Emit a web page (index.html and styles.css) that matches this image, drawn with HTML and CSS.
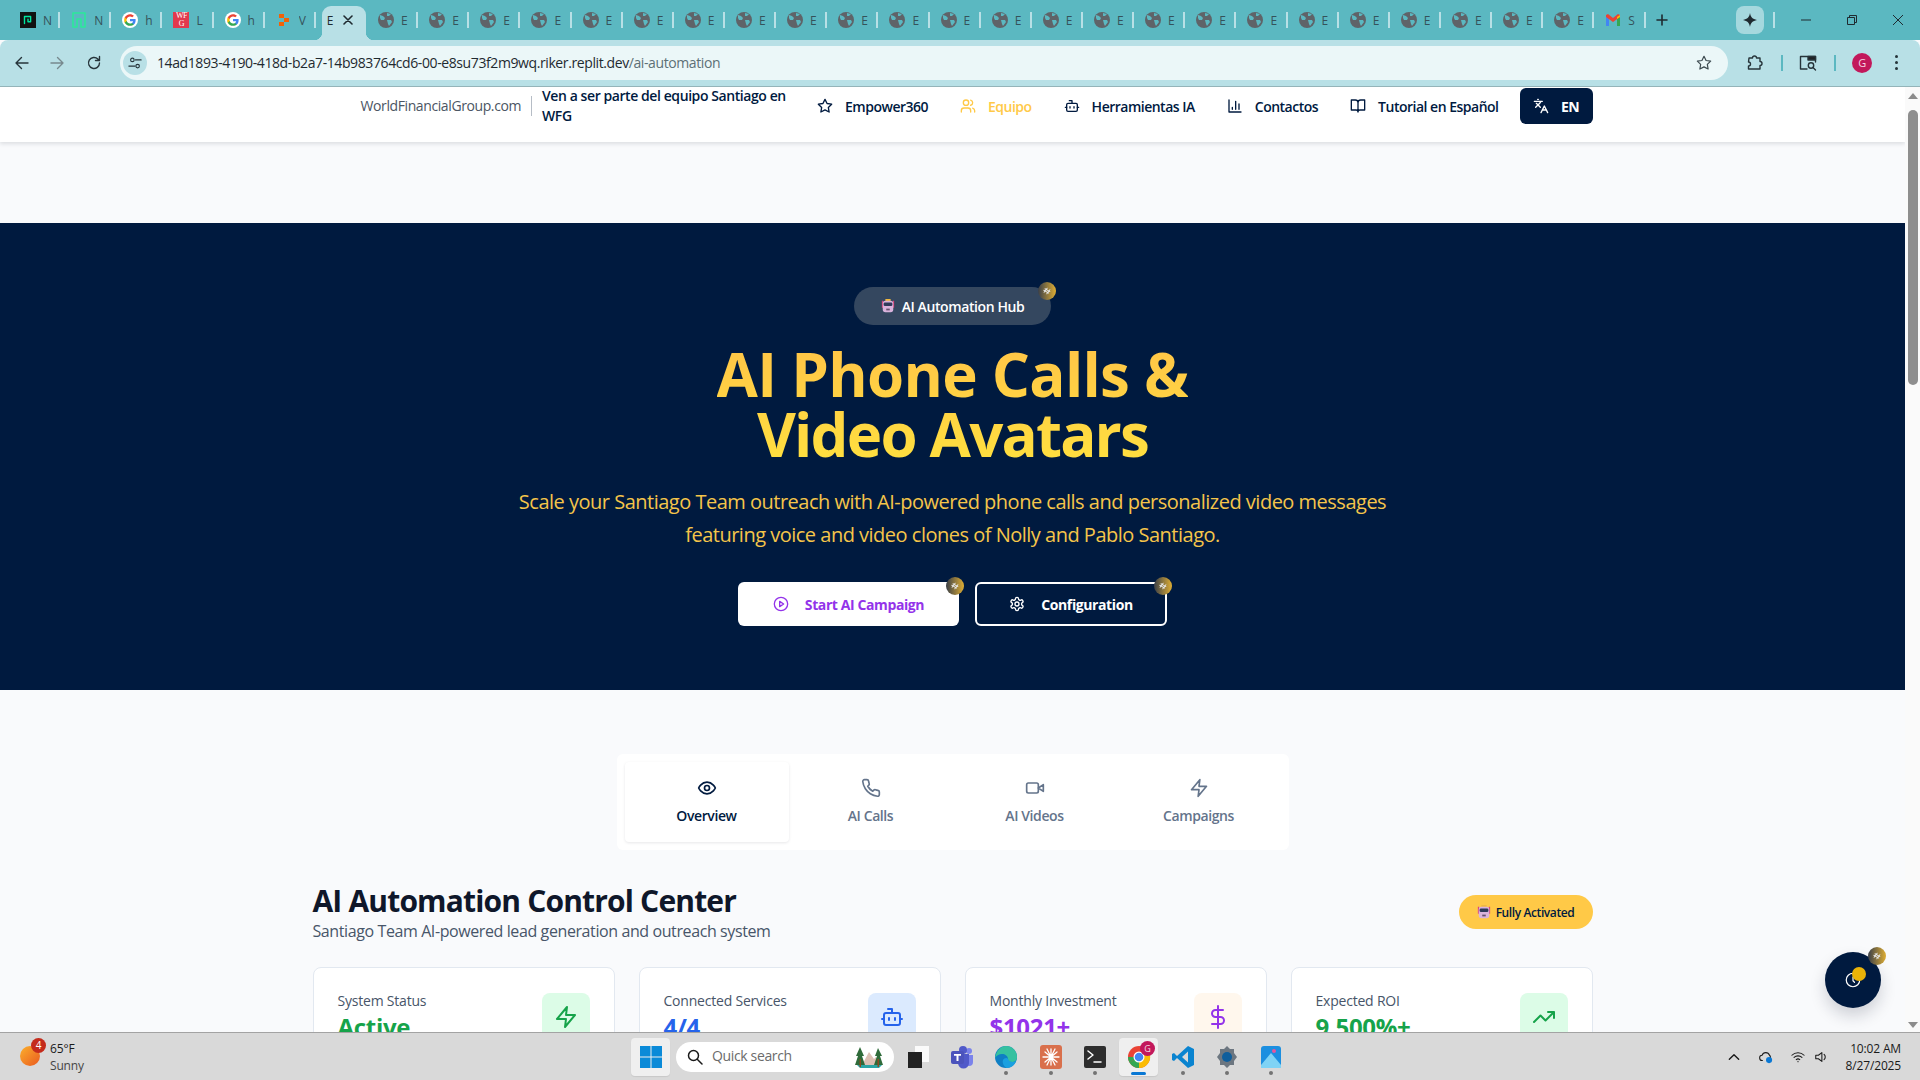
FILE: index.html
```html
<!DOCTYPE html>
<html>

<head>
    <title>AI Automation</title>
    <meta charset="utf-8">
    <link rel="stylesheet" href="styles.css">
</head>

<body>
    <!-- icones reutilisees -->
    <svg class="sprite" xmlns="http://www.w3.org/2000/svg">
        <symbol id="globe" viewBox="0 0 16 16">
            <circle cx="8" cy="8" r="8" fill="#5f6368" />
            <path d="M2 3l3 1 2 2-1 2-3 0-1-2zM9 1l4 1-2 2-2 0zM9 8l4 0 1 2-3 4-1-2z" fill="#5bb8c1" />
        </symbol>
        <symbol id="google" viewBox="0 0 24 24">
            <circle cx="12" cy="12" r="12" fill="#fff" />
            <g transform="translate(2.4 2.4) scale(.8)">
                <path fill="#4285F4" d="M22.56 12.25c0-.78-.07-1.53-.2-2.25H12v4.26h5.92c-.26 1.37-1.04 2.53-2.21 3.31v2.77h3.57c2.08-1.92 3.28-4.74 3.28-8.09z" />
                <path fill="#34A853" d="M12 23c2.97 0 5.46-.98 7.28-2.66l-3.57-2.77c-.98.66-2.23 1.06-3.71 1.06-2.86 0-5.29-1.93-6.16-4.53H2.18v2.84C3.99 20.53 7.7 23 12 23z" />
                <path fill="#FBBC05" d="M5.84 14.09c-.22-.66-.35-1.36-.35-2.09s.13-1.43.35-2.09V7.07H2.18C1.43 8.55 1 10.22 1 12s.43 3.45 1.18 4.93l3.66-2.84z" />
                <path fill="#EA4335" d="M12 5.38c1.62 0 3.06.56 4.21 1.64l3.15-3.15C17.45 2.09 14.97 1 12 1 7.7 1 3.99 3.47 2.18 7.07l3.66 2.84c.87-2.6 3.3-4.53 6.16-4.53z" />
            </g>
        </symbol>
        <symbol id="bot" viewBox="0 0 24 24">
            <path d="M12 8V4H8" />
            <rect x="4" y="8" width="16" height="12" rx="2" />
            <path d="M2 14h2M20 14h2M15 13v2M9 13v2" />
        </symbol>
        <symbol id="zap" viewBox="0 0 24 24">
            <polygon points="13 2 3 14 12 14 11 22 21 10 12 10 13 2" />
        </symbol>
        <symbol id="spark" viewBox="0 0 16 16">
            <path d="M6 4 5 12M11 4l-1 8M3.500 6.500h9M3 9.500h9" />
        </symbol>
        <symbol id="robot" viewBox="0 0 16 16">
            <rect x="5" y="0" width="6" height="3" fill="#f0b840" />
            <rect x="1" y="2" width="1.500" height="8" fill="#d8457a" />
            <rect x="13.500" y="2" width="1.500" height="8" fill="#d8457a" />
            <rect x="2" y="2" width="12" height="13" rx="3" fill="#d9b3dc" />
            <rect x="3" y="4" width="10" height="4" rx="1.500" fill="#2f3a5a" />
            <rect x="6" y="11" width="4" height="2" fill="#66506e" />
        </symbol>
    </svg>

    <div class="strip">
        <div class="tab"><span class="fav fav-neon"><svg viewBox="0 0 16 16"><path d="M4 12V4h7v6H8V7" /></svg></span><span class="tab-txt">N</span></div>
        <div class="tab"><span class="fav"><svg class="n-big" viewBox="0 0 16 16"><path d="M2 15V1h12v14h-4V7H6v8z" /></svg></span><span class="tab-txt">N</span></div>
        <div class="tab"><svg class="fav"><use href="#google" /></svg><span class="tab-txt">h</span></div>
        <div class="tab"><span class="fav fav-wfg">WF<br>G</span><span class="tab-txt">L</span></div>
        <div class="tab"><svg class="fav"><use href="#google" /></svg><span class="tab-txt">h</span></div>
        <div class="tab"><svg class="fav" viewBox="0 0 16 16"><path d="M3 2h5v4H3zM8 6h5v4H8zM3 10h5v4H3z" fill="#f26207" /></svg><span class="tab-txt">V</span></div>
        <div class="tab tab-on"><span class="tab-txt">E</span><svg class="tab-x" viewBox="0 0 10 10"><path d="M1 1l8 8M9 1l-8 8" /></svg></div>
        <div class="tab"><svg class="fav"><use href="#globe" /></svg><span class="tab-txt">E</span></div>
        <div class="tab"><svg class="fav"><use href="#globe" /></svg><span class="tab-txt">E</span></div>
        <div class="tab"><svg class="fav"><use href="#globe" /></svg><span class="tab-txt">E</span></div>
        <div class="tab"><svg class="fav"><use href="#globe" /></svg><span class="tab-txt">E</span></div>
        <div class="tab"><svg class="fav"><use href="#globe" /></svg><span class="tab-txt">E</span></div>
        <div class="tab"><svg class="fav"><use href="#globe" /></svg><span class="tab-txt">E</span></div>
        <div class="tab"><svg class="fav"><use href="#globe" /></svg><span class="tab-txt">E</span></div>
        <div class="tab"><svg class="fav"><use href="#globe" /></svg><span class="tab-txt">E</span></div>
        <div class="tab"><svg class="fav"><use href="#globe" /></svg><span class="tab-txt">E</span></div>
        <div class="tab"><svg class="fav"><use href="#globe" /></svg><span class="tab-txt">E</span></div>
        <div class="tab"><svg class="fav"><use href="#globe" /></svg><span class="tab-txt">E</span></div>
        <div class="tab"><svg class="fav"><use href="#globe" /></svg><span class="tab-txt">E</span></div>
        <div class="tab"><svg class="fav"><use href="#globe" /></svg><span class="tab-txt">E</span></div>
        <div class="tab"><svg class="fav"><use href="#globe" /></svg><span class="tab-txt">E</span></div>
        <div class="tab"><svg class="fav"><use href="#globe" /></svg><span class="tab-txt">E</span></div>
        <div class="tab"><svg class="fav"><use href="#globe" /></svg><span class="tab-txt">E</span></div>
        <div class="tab"><svg class="fav"><use href="#globe" /></svg><span class="tab-txt">E</span></div>
        <div class="tab"><svg class="fav"><use href="#globe" /></svg><span class="tab-txt">E</span></div>
        <div class="tab"><svg class="fav"><use href="#globe" /></svg><span class="tab-txt">E</span></div>
        <div class="tab"><svg class="fav"><use href="#globe" /></svg><span class="tab-txt">E</span></div>
        <div class="tab"><svg class="fav"><use href="#globe" /></svg><span class="tab-txt">E</span></div>
        <div class="tab"><svg class="fav"><use href="#globe" /></svg><span class="tab-txt">E</span></div>
        <div class="tab"><svg class="fav"><use href="#globe" /></svg><span class="tab-txt">E</span></div>
        <div class="tab"><svg class="fav"><use href="#globe" /></svg><span class="tab-txt">E</span></div>
        <div class="tab"><svg class="fav" viewBox="0 0 16 16"><path d="M1 14V3l3 2v9z" fill="#4285F4" /><path d="M12 14V5l3-2v11z" fill="#34A853" /><path d="M1 3l2-1 5 4 5-4 2 1v2L8 10 1 5z" fill="#EA4335" /><path d="M12 5l3-2v2l-3 2z" fill="#FBBC05" /></svg><span class="tab-txt">S</span></div>
        <svg class="new-tab" viewBox="0 0 12 12"><path d="M6 1v10M1 6h10" /></svg>
        <div class="gem"><svg viewBox="0 0 16 16"><path d="M8 0c.8 4.500 2.800 7 8 8-5.200 1-7.200 3.500-8 8-.8-4.500-2.800-7-8-8 5.200-1 7.200-3.500 8-8z" /></svg></div>
        <span class="win-sep"></span>
        <svg class="win-btn" viewBox="0 0 12 12"><path d="M1 6h10" /></svg>
        <svg class="win-btn" viewBox="0 0 12 12"><path d="M1.500 3.500h7v7h-7zM3.500 3.500v-2h7v7h-2" /></svg>
        <svg class="win-btn" viewBox="0 0 12 12"><path d="M1 1l10 10M11 1L1 11" /></svg>
    </div>

    <div class="toolbar">
        <svg class="tool" viewBox="0 0 16 16"><path d="M14 8H2M7.500 2.500 2 8l5.500 5.500" /></svg>
        <svg class="tool tool-off" viewBox="0 0 16 16"><path d="M2 8h12M8.500 2.500 14 8l-5.500 5.500" /></svg>
        <svg class="tool tool-reload" viewBox="0 0 16 16"><path d="M13.500 8a5.500 5.500 0 1 1-1.600-3.900L13.500 5.500M13.500 1.500v4h-4" /></svg>
        <div class="omni">
            <span class="site-chip"><svg viewBox="0 0 16 16"><circle cx="5" cy="4.500" r="2" /><circle cx="11" cy="11.500" r="2" /><path d="M8.500 4.500H15M1 11.500h7" /></svg></span>
            <span class="url">14ad1893-4190-418d-b2a7-14b983764cd6-00-e8su73f2m9wq.riker.replit.dev<span class="url-path">/ai-automation</span></span>
            <svg class="omni-star" viewBox="0 0 24 24"><polygon points="12 2 15.090 8.260 22 9.270 17 14.140 18.180 21.020 12 17.770 5.820 21.020 7 14.140 2 9.270 8.910 8.260 12 2" /></svg>
        </div>
        <svg class="tool tool-ext" viewBox="0 0 18 18"><path d="M3 4h3.500a2 2 0 0 1 4 0H14v3.500a2 2 0 0 1 0 4V15H2.500v-3a2 2 0 0 0 0-4z" /></svg>
        <span class="tool-sep"></span>
        <svg class="tool tool-search" viewBox="0 0 18 18"><path d="M8 15H1.500V2.500h15V8" /><rect x="9" y="2.500" width="7.500" height="3.500" fill="#202124" /><circle cx="12" cy="11.500" r="2.700" /><path d="M14 13.500l2.500 2.500" /></svg>
        <span class="tool-sep"></span>
        <span class="avatar">G</span>
        <span class="dots"><i></i><i></i><i></i></span>
    </div>

    <div class="viewport">
        <div class="page">
            <div class="topnav">
                <div class="topnav-in">
                    <span class="wfg-link">WorldFinancialGroup.com</span>
                    <span class="join">Ven a ser parte del equipo Santiago en WFG</span>
                    <span class="nav-item"><svg class="ico" viewBox="0 0 24 24"><polygon points="12 2 15.090 8.260 22 9.270 17 14.140 18.180 21.020 12 17.770 5.820 21.020 7 14.140 2 9.270 8.910 8.260 12 2" /></svg>Empower360</span>
                    <span class="nav-item nav-on"><svg class="ico" viewBox="0 0 24 24"><path d="M16 21v-2a4 4 0 0 0-4-4H6a4 4 0 0 0-4 4v2" /><circle cx="9" cy="7" r="4" /><path d="M22 21v-2a4 4 0 0 0-3-3.870M16 3.130a4 4 0 0 1 0 7.750" /></svg>Equipo</span>
                    <span class="nav-item"><svg class="ico"><use href="#bot" /></svg>Herramientas IA</span>
                    <span class="nav-item"><svg class="ico" viewBox="0 0 24 24"><path d="M3 3v18h18M18 17V9M13 17V5M8 17v-3" /></svg>Contactos</span>
                    <span class="nav-item"><svg class="ico" viewBox="0 0 24 24"><path d="M2 3h6a4 4 0 0 1 4 4v14a3 3 0 0 0-3-3H2zM22 3h-6a4 4 0 0 0-4 4v14a3 3 0 0 1 3-3h7z" /></svg>Tutorial en Español</span>
                    <span class="lang"><svg class="ico" viewBox="0 0 24 24"><path d="m5 8 6 6M4 14l6-6 2-3M2 5h12M7 2h1M22 22l-5-10-5 10M14 18h6" /></svg>EN</span>
                </div>
            </div>

            <section class="hero">
                <div class="hero-badge">
                    <svg class="emoji"><use href="#robot" /></svg>AI Automation Hub
                    <span class="spark"><svg><use href="#spark" /></svg></span>
                </div>
                <h1 class="hero-title">AI Phone Calls &amp;<br><span class="title-two">Video Avatars</span></h1>
                <p class="hero-sub">Scale your Santiago Team outreach with AI-powered phone calls and personalized video messages<br>featuring voice and video clones of Nolly and Pablo Santiago.</p>
                <div class="hero-btns">
                    <span class="btn btn-white">
                        <svg class="ico" viewBox="0 0 24 24"><circle cx="12" cy="12" r="10" /><polygon points="10 8 16 12 10 16 10 8" /></svg>Start AI Campaign
                        <span class="spark"><svg><use href="#spark" /></svg></span>
                    </span>
                    <span class="btn btn-line">
                        <svg class="ico" viewBox="0 0 24 24"><path d="M12.220 2h-.44a2 2 0 0 0-2 2v.18a2 2 0 0 1-1 1.730l-.43.25a2 2 0 0 1-2 0l-.15-.08a2 2 0 0 0-2.730.73l-.22.38a2 2 0 0 0 .73 2.730l.15.1a2 2 0 0 1 1 1.720v.51a2 2 0 0 1-1 1.740l-.15.09a2 2 0 0 0-.73 2.730l.22.38a2 2 0 0 0 2.730.73l.15-.08a2 2 0 0 1 2 0l.43.25a2 2 0 0 1 1 1.730V20a2 2 0 0 0 2 2h.44a2 2 0 0 0 2-2v-.18a2 2 0 0 1 1-1.730l.43-.25a2 2 0 0 1 2 0l.15.08a2 2 0 0 0 2.730-.73l.22-.39a2 2 0 0 0-.73-2.730l-.15-.08a2 2 0 0 1-1-1.740v-.5a2 2 0 0 1 1-1.740l.15-.09a2 2 0 0 0 .73-2.730l-.22-.38a2 2 0 0 0-2.730-.73l-.15.08a2 2 0 0 1-2 0l-.43-.25a2 2 0 0 1-1-1.730V4a2 2 0 0 0-2-2z" /><circle cx="12" cy="12" r="3" /></svg>Configuration
                        <span class="spark"><svg><use href="#spark" /></svg></span>
                    </span>
                </div>
            </section>

            <div class="tabs">
                <div class="tabs-item tabs-on"><svg viewBox="0 0 24 24"><path d="M2 12s3-7 10-7 10 7 10 7-3 7-10 7-10-7-10-7Z" /><circle cx="12" cy="12" r="3" /></svg>Overview</div>
                <div class="tabs-item"><svg viewBox="0 0 24 24"><path d="M22 16.920v3a2 2 0 0 1-2.180 2 19.790 19.790 0 0 1-8.630-3.070 19.500 19.500 0 0 1-6-6 19.790 19.790 0 0 1-3.070-8.670A2 2 0 0 1 4.110 2h3a2 2 0 0 1 2 1.720 12.840 12.840 0 0 0 .7 2.810 2 2 0 0 1-.45 2.110L8.090 9.910a16 16 0 0 0 6 6l1.270-1.270a2 2 0 0 1 2.110-.45 12.840 12.840 0 0 0 2.810.7A2 2 0 0 1 22 16.920z" /></svg>AI Calls</div>
                <div class="tabs-item"><svg viewBox="0 0 24 24"><path d="m22 8-6 4 6 4V8Z" /><rect x="2" y="6" width="14" height="12" rx="2" /></svg>AI Videos</div>
                <div class="tabs-item"><svg><use href="#zap" /></svg>Campaigns</div>
            </div>

            <section class="control">
                <div class="control-head">
                    <div>
                        <h2>AI Automation Control Center</h2>
                        <p>Santiago Team AI-powered lead generation and outreach system</p>
                    </div>
                    <span class="pill"><svg class="emoji"><use href="#robot" /></svg>Fully Activated</span>
                </div>
                <div class="cards">
                    <div class="card">
                        <div>
                            <div class="card-label">System Status</div>
                            <div class="card-value c-green">Active</div>
                        </div>
                        <span class="card-ico bg-green c-green"><svg><use href="#zap" /></svg></span>
                    </div>
                    <div class="card">
                        <div>
                            <div class="card-label">Connected Services</div>
                            <div class="card-value c-blue">4/4</div>
                        </div>
                        <span class="card-ico bg-blue c-blue"><svg><use href="#bot" /></svg></span>
                    </div>
                    <div class="card">
                        <div>
                            <div class="card-label">Monthly Investment</div>
                            <div class="card-value c-purple">$1021+</div>
                        </div>
                        <span class="card-ico bg-cream c-purple"><svg viewBox="0 0 24 24"><path d="M12 1v22M17 5H9.500a3.500 3.500 0 0 0 0 7h5a3.500 3.500 0 0 1 0 7H6" /></svg></span>
                    </div>
                    <div class="card">
                        <div>
                            <div class="card-label">Expected ROI</div>
                            <div class="card-value c-green">9,500%+</div>
                        </div>
                        <span class="card-ico bg-green c-green"><svg viewBox="0 0 24 24"><path d="M22 7l-8.500 8.500-5-5L2 17M16 7h6v6" /></svg></span>
                    </div>
                </div>
            </section>

            <div class="fab">
                <svg viewBox="0 0 24 24"><circle cx="12" cy="12" r="9" /><path d="M12 8v5l2 2" /></svg>
                <span class="fab-dot"></span>
                <span class="spark"><svg><use href="#spark" /></svg></span>
            </div>
        </div>
        <div class="scrollbar">
            <span class="arrow-up"></span>
            <span class="thumb"></span>
            <span class="arrow-down"></span>
        </div>
    </div>

    <div class="taskbar">
        <div class="weather">
            <span class="sun"></span>
            <span class="sun-badge">4</span>
            <div class="weather-txt">65°F<span>Sunny</span></div>
        </div>
        <div class="task-mid">
            <span class="task-btn task-hi task-start">
                <svg viewBox="0 0 24 24"><path d="M1 1h10.500v10.500H1zM12.500 1H23v10.500H12.500zM1 12.500h10.500V23H1zM12.500 12.500H23V23H12.500z" fill="#0a8ad8" /></svg>
            </span>
            <div class="search">
                <svg viewBox="0 0 16 16"><circle cx="6.500" cy="6.500" r="5" /><path d="M10.500 10.500 15 15" /></svg>
                <span>Quick search</span>
                <svg class="search-pic" viewBox="0 0 30 24"><path d="M8 20 15 7l5 7 2-2 4 8z" fill="#dcc0b4" /><path d="M3 20h25l-3 3H6z" fill="#2ba5a5" /><path d="M6 2 2 11h2l-3 9h10l-3-9h2zM24 3l-3 8h2l-3 9h9l-3-9h2z" fill="#2f6b3a" /><path d="M5.500 14h1.500v8H5.500zM23.500 14H25v8h-1.500z" fill="#8a4b24" /></svg>
            </div>
            <span class="task-btn"><svg viewBox="0 0 24 24"><rect x="9" y="1" width="14" height="16" fill="#fafafa" /><rect x="2" y="7" width="14" height="16" fill="#222" /></svg></span>
            <span class="task-btn"><svg viewBox="0 0 24 24"><circle cx="19" cy="6" r="3" fill="#7b83eb" /><path d="M15 10h8v7a4 4 0 0 1-8 0z" fill="#7b83eb" /><circle cx="13" cy="5" r="4" fill="#5059c9" /><path d="M8 9h11v9a5 5 0 0 1-11 0z" fill="#5059c9" /><rect x="1" y="6" width="13" height="13" rx="2" fill="#4b53bc" /><path d="M4 9h7v1.800H8.500V16h-2v-5.200H4z" fill="#fff" /></svg></span>
            <span class="task-btn task-run"><svg viewBox="0 0 24 24"><circle cx="12" cy="12" r="11" fill="#0f7fc4" /><path d="M12 1a11 11 0 0 1 11 11c0 3-2 5-5 5-3 0-4-1-4-3 0-3-3-5-6-5-3 0-6 2-7 4C2 7 6 1 12 1z" fill="#35c1a0" /><path d="M14 14c1 3 5 4 8 2-1 4-5 7-9 7-3-1-5-5-4-8 1-2 4-3 5-1z" fill="#1aa0e0" /></svg></span>
            <span class="task-btn task-run task-claude"><svg viewBox="0 0 24 24"><rect x="1" y="0" width="22" height="24" rx="3" fill="#d9704c" /><path d="M12 4v16M6 7l12 10M18 7 6 17M4 12h16M8 4l8 16M16 4 8 20" stroke="#fff" stroke-width="1.300" /></svg></span>
            <span class="task-btn task-run"><svg viewBox="0 0 24 24"><rect x="1" y="1" width="22" height="22" rx="2" fill="#2d2d2d" /><path d="M5 6l5 4-5 4" stroke="#fff" stroke-width="1.500" fill="none" /><path d="M11 17h7" stroke="#fff" stroke-width="1.500" /></svg></span>
            <span class="task-btn task-hi task-cur">
                <svg viewBox="0 0 24 24"><circle cx="12" cy="12" r="11" fill="#ea4335" /><path d="M12 12 2.500 17.500A11 11 0 0 0 12 23z" fill="#34a853" /><path d="M12 23A11 11 0 0 0 22 7H12z" fill="#fbbc05" /><path d="M12 12 2.500 17.500A11 11 0 0 1 1 12h11z" fill="#34a853" /><circle cx="12" cy="12" r="5.500" fill="#fff" /><circle cx="12" cy="12" r="4.300" fill="#4285f4" /></svg>
                <span class="chrome-badge">G</span>
            </span>
            <span class="task-btn task-run"><svg viewBox="0 0 24 24"><path d="M17 1 23 4v16l-6 3L6 13l-3 3-2-1V9l2-1 3 3z" fill="#0a84d0" /><path d="M17 6.500 11 12l6 5.500z" fill="#d9d9d9" /></svg></span>
            <span class="task-btn task-run"><svg viewBox="0 0 24 24"><path d="M12 1l3 3h4v4l3 4-3 4v4h-4l-3 3-3-3H5v-4l-3-4 3-4V4h4z" fill="#6c7680" /><circle cx="12" cy="12" r="5" fill="#0f5e9c" /></svg></span>
            <span class="task-btn task-run"><svg viewBox="0 0 24 24"><rect x="2" y="1" width="20" height="22" rx="3" fill="#1c8fe0" /><path d="M2 20 12 8l10 12v3H2z" fill="#7fd3f5" /><circle cx="15" cy="6" r="2" fill="#e8559c" /></svg></span>
        </div>
        <div class="tray">
            <svg class="tray-ico" viewBox="0 0 12 12"><path d="M2 8l4-4 4 4" /></svg>
            <svg class="tray-ico" viewBox="0 0 16 16"><path d="M4 12a3 3 0 0 1-.5-6A4.500 4.500 0 0 1 12 6a3 3 0 0 1 1 3" /><circle cx="11.500" cy="11.500" r="3.500" fill="#0a78d4" stroke="none" /></svg>
            <svg class="tray-ico tray-wifi" viewBox="0 0 16 16"><path d="M1 6a10 10 0 0 1 14 0M3.500 8.500a6.500 6.500 0 0 1 9 0M6 11a3 3 0 0 1 4 0M8 13v.5" /></svg>
            <svg class="tray-ico tray-vol" viewBox="0 0 16 16"><path d="M2 6h3l4-3v10l-4-3H2zM11.500 5a4 4 0 0 1 0 6" /></svg>
            <div class="clock">10:02 AM<span>8/27/2025</span></div>
        </div>
    </div>
</body>

</html>
```

FILE: styles.css
```css
* {
    box-sizing: border-box;
}

body {
    margin: 0;
    width: 1920px;
    height: 1080px;
    overflow: hidden;
    display: flex;
    flex-direction: column;
    font-family: "Open Sans", "Liberation Sans", sans-serif;
    letter-spacing: -0.4px;
    color: #0f172a;
    background-color: #f9fafc;
}

.sprite {
    display: none;
}

/* svg au trait, comme lucide */
svg {
    fill: none;
    stroke: currentColor;
    stroke-width: 2;
    stroke-linecap: round;
    stroke-linejoin: round;
    flex: none;
}

/* ---- onglets chrome ---- */
.strip {
    height: 40px;
    flex: none;
    display: flex;
    align-items: center;
    padding-left: 8px;
    background-color: #5bb8c1;
}

.tab {
    position: relative;
    flex: none;
    width: 51.15px;
    height: 34px;
    margin-top: 6px;
    display: flex;
    align-items: center;
    padding: 0 0 6px 12px;
    font-size: 12px;
    color: #35525a;
}

.tab::after {
    content: "";
    position: absolute;
    right: -1px;
    top: 6px;
    width: 2px;
    height: 16px;
    background-color: #b8e0e6;
}

.tab-txt {
    margin-left: 7px;
    width: 9px;
    overflow: hidden;
}

.fav {
    flex: none;
    width: 16px;
    height: 16px;
    stroke: none;
    display: block;
}

.fav-neon {
    background-color: #111;
    color: #00e6a0;
    padding: 1px;
}

.fav-neon svg {
    width: 14px;
    height: 14px;
    display: block;
    stroke-width: 1.6;
}

.n-big {
    width: 16px;
    height: 16px;
    display: block;
    color: #2ce89a;
    stroke-width: 1.6;
}

.fav-wfg {
    background-color: #e2384d;
    color: #fff;
    font-family: "Liberation Serif", serif;
    font-size: 8px;
    line-height: 8px;
    text-align: center;
    letter-spacing: -0.5px;
}

.tab-on {
    width: 44.15px;
    margin-left: 7px;
    padding-left: 5px;
    border-radius: 9px 9px 0 0;
    background-color: #b8e0e6;
    color: #1f2a30;
}

.tab-on::before,
.tab-on::after {
    content: "";
    position: absolute;
    top: auto;
    bottom: 0;
    width: 8px;
    height: 8px;
}

.tab-on::before {
    left: -8px;
    background: radial-gradient(circle at 0 0, #5bb8c1 8px, #b8e0e6 8.5px);
}

.tab-on::after {
    right: -8px;
    background: radial-gradient(circle at 100% 0, #5bb8c1 8px, #b8e0e6 8.5px);
}

.tab-on .tab-txt {
    margin-left: 0;
}

.tab-x {
    width: 10px;
    height: 10px;
    margin-left: 7px;
    stroke-width: 1.6;
}

.new-tab {
    width: 12px;
    height: 12px;
    margin-left: 11px;
    color: #1f2a30;
    stroke-width: 1.6;
}

.gem {
    flex: none;
    width: 28px;
    height: 28px;
    margin-left: 68px;
    border-radius: 8px;
    background-color: #a5d8de;
    display: flex;
    align-items: center;
    justify-content: center;
}

.gem svg {
    width: 14px;
    height: 14px;
    fill: #1f2a30;
    stroke: none;
}

.win-sep {
    flex: none;
    width: 2px;
    height: 16px;
    margin: 0 25px 0 9px;
    background-color: #b8e0e6;
}

.win-btn {
    width: 12px;
    height: 12px;
    margin-right: 34px;
    color: #1f2a30;
    stroke-width: 1;
    stroke-linecap: butt;
}

/* ---- barre d'adresse ---- */
.toolbar {
    height: 47px;
    flex: none;
    display: flex;
    align-items: center;
    padding: 0 0 1px 14px;
    border-radius: 8px 8px 0 0;
    background-color: #b8e0e6;
    border-bottom: 1px solid #94b4b9;
}

.tool {
    width: 16px;
    height: 16px;
    margin-right: 19px;
    color: #26343a;
    stroke-width: 1.4;
}

.tool-off {
    color: #77898e;
}

.tool-reload {
    margin-left: 2px;
    margin-right: 17px;
}

.omni {
    width: 1608px;
    height: 34px;
    margin-left: 1px;
    display: flex;
    align-items: center;
    padding: 0 16px 0 3px;
    border-radius: 17px;
    background-color: #ebf7f8;
}

.site-chip {
    width: 24px;
    height: 24px;
    margin-right: 10px;
    border-radius: 50%;
    background-color: #b8e0e6;
    display: flex;
    align-items: center;
    justify-content: center;
    color: #26343a;
}

.site-chip svg {
    width: 14px;
    height: 14px;
    stroke-width: 1.3;
}

.url {
    flex: 1;
    font-size: 14px;
    color: #1f2a30;
}

.url-path {
    color: #5d7076;
}

.omni-star {
    width: 16px;
    height: 16px;
    color: #3c4a4f;
    stroke-width: 1.8;
}

.tool-ext {
    width: 18px;
    height: 18px;
    margin: 0 0 0 18px;
}

.tool-search {
    width: 18px;
    height: 18px;
    margin: 0;
}

.tool-sep {
    width: 2px;
    height: 16px;
    margin: 0 16.5px;
    background-color: #5bb8c1;
}

.avatar {
    width: 20px;
    height: 20px;
    border-radius: 50%;
    background-color: #c2185b;
    color: #f5d5e2;
    font-size: 11px;
    line-height: 20px;
    text-align: center;
}

.dots {
    display: flex;
    flex-direction: column;
    gap: 3px;
    margin-left: 23px;
}

.dots i {
    width: 3px;
    height: 3px;
    border-radius: 50%;
    background-color: #26343a;
}

/* ---- page ---- */
.viewport {
    flex: 1;
    min-height: 0;
    display: flex;
    position: relative;
}

.page {
    flex: 1;
    overflow: hidden;
    background-color: #f9fafc;
}

.scrollbar {
    width: 15px;
    flex: none;
    display: flex;
    flex-direction: column;
    align-items: center;
    background-color: #fafafa;
}

.arrow-up {
    margin: 6px 0 11px;
    border: 5px solid transparent;
    border-top: 0;
    border-bottom: 6px solid #8c8c8c;
}

.thumb {
    width: 10px;
    height: 275px;
    border-radius: 5px;
    background-color: #8e8e8e;
}

.arrow-down {
    margin-top: auto;
    margin-bottom: 4px;
    border: 5px solid transparent;
    border-bottom: 0;
    border-top: 6px solid #8c8c8c;
}

.topnav {
    height: 55px;
    background-color: #fff;
    box-shadow: 0 2px 4px rgba(15, 23, 42, 0.12);
}

.topnav-in {
    max-width: 1280px;
    height: 100%;
    margin: 0 auto;
    padding-bottom: 17px;
    display: flex;
    align-items: center;
    justify-content: flex-end;
    font-size: 14px;
    font-weight: 600;
    letter-spacing: -0.5px;
    color: #001a3f;
}

.wfg-link {
    color: #4b5563;
    font-weight: 400;
    letter-spacing: -0.4px;
    padding-right: 10px;
    border-right: 1px solid #b6bdc6;
    line-height: 20px;
}

.join {
    width: 255px;
    margin: 0 20px 0 10px;
    line-height: 20px;
    letter-spacing: -0.42px;
}

.nav-item {
    display: flex;
    align-items: center;
    gap: 12px;
    margin-right: 32px;
}

.nav-on {
    color: #ffc947;
}

.ico {
    width: 16px;
    height: 16px;
}

.lang {
    width: 73px;
    height: 36px;
    margin-left: -11px;
    display: flex;
    align-items: center;
    justify-content: center;
    gap: 12px;
    border-radius: 6px;
    background-color: #001a3f;
    color: #fff;
    font-weight: 700;
}

.hero {
    margin-top: 81px;
    height: 467px;
    padding-top: 64px;
    display: flex;
    flex-direction: column;
    align-items: center;
    text-align: center;
    background-color: #001a3f;
    color: #fff;
}

.hero-badge {
    position: relative;
    height: 38px;
    width: 197px;
    display: flex;
    align-items: center;
    justify-content: center;
    gap: 7px;
    border-radius: 19px;
    background-color: #34475f;
    font-size: 14px;
    font-weight: 600;
}

.emoji {
    width: 14px;
    height: 16px;
    stroke: none;
}

/* petite pastille replit */
.spark {
    position: absolute;
    top: -5px;
    right: -5px;
    width: 18px;
    height: 18px;
    border-radius: 50%;
    display: flex;
    align-items: center;
    justify-content: center;
    background: linear-gradient(90deg, #3a3f48, #dfae34);
}

.spark svg {
    width: 10px;
    height: 10px;
    color: #e6e6e6;
    stroke-width: 1.6;
    transform: rotate(30deg);
}

.hero-title {
    margin: 19px 0 0;
    font-size: 60px;
    line-height: 60px;
    font-weight: 700;
    letter-spacing: -0.7px;
    color: transparent;
    background: linear-gradient(180deg, #ffc547, #ffe03f);
    -webkit-background-clip: text;
    background-clip: text;
}

.title-two {
    letter-spacing: -1.8px;
}

.hero-sub {
    margin: 22px 0 0;
    font-size: 20px;
    line-height: 32.5px;
    letter-spacing: -0.5px;
    color: #f5c54a;
}

.hero-btns {
    margin-top: 31px;
    display: flex;
    gap: 16px;
}

.btn {
    position: relative;
    height: 44px;
    display: flex;
    align-items: center;
    justify-content: center;
    gap: 16px;
    border-radius: 6px;
    font-size: 14px;
    font-weight: 700;
}

.btn-white {
    width: 221px;
    background-color: #fff;
    color: #9333ea;
}

.btn-line {
    width: 192px;
    border: 2px solid #fff;
}

.btn-line .spark {
    top: -7px;
    right: -7px;
}

.tabs {
    width: 672px;
    height: 96px;
    margin: 64px auto 0;
    padding: 8px;
    display: grid;
    grid-template-columns: repeat(4, 1fr);
    border-radius: 6px;
    background-color: #fff;
}

.tabs-item {
    height: 80px;
    padding-bottom: 2px;
    display: flex;
    flex-direction: column;
    align-items: center;
    justify-content: center;
    gap: 8px;
    border-radius: 4px;
    font-size: 14px;
    font-weight: 600;
    color: #64748b;
}

.tabs-item svg {
    width: 20px;
    height: 20px;
}

.tabs-on {
    color: #001a3f;
    box-shadow: 0 1px 3px rgba(15, 23, 42, 0.1);
}

.control {
    max-width: 1280px;
    margin: 33px auto 0;
}

.control-head {
    display: flex;
    align-items: center;
    justify-content: space-between;
    margin-bottom: 24px;
}

.control-head h2 {
    margin: 0;
    font-size: 30px;
    line-height: 36px;
    font-weight: 700;
    letter-spacing: -0.83px;
}

.control-head p {
    margin: 0;
    font-size: 16px;
    line-height: 24px;
    color: #475569;
}

.pill {
    width: 134px;
    height: 34px;
    margin-bottom: 2px;
    display: flex;
    align-items: center;
    justify-content: center;
    gap: 5px;
    border-radius: 17px;
    background-color: #ffc947;
    color: #001a3f;
    font-size: 12px;
    font-weight: 600;
}

.cards {
    display: grid;
    grid-template-columns: repeat(4, 1fr);
    gap: 24px;
}

.card {
    height: 130px;
    padding: 25px 24px;
    display: flex;
    justify-content: space-between;
    border: 1px solid #e2e8f0;
    border-radius: 8px;
    background-color: #fff;
}

.card-label {
    margin-top: -2px;
    font-size: 14px;
    line-height: 20px;
    font-weight: 500;
    letter-spacing: -0.21px;
    color: #475569;
}

.card-value {
    font-size: 24px;
    line-height: 32px;
    font-weight: 700;
    letter-spacing: -0.3px;
}

.card-ico {
    width: 48px;
    height: 48px;
    display: flex;
    align-items: center;
    justify-content: center;
    border-radius: 8px;
}

.card-ico svg {
    width: 24px;
    height: 24px;
}

.c-green { color: #16a34a; }
.c-blue { color: #2563eb; }
.c-purple { color: #9333ea; }
.bg-green { background-color: #dcfce7; }
.bg-blue { background-color: #dbeafe; }
.bg-cream { background-color: #fff7ed; }

.fab {
    position: absolute;
    left: 1825px;
    top: 865px;
    width: 56px;
    height: 56px;
    display: flex;
    align-items: center;
    justify-content: center;
    border-radius: 50%;
    background-color: #001a3f;
    color: #fff;
    box-shadow: 0 8px 16px rgba(15, 23, 42, 0.18);
}

.fab svg {
    width: 18px;
    height: 18px;
    stroke-width: 1.6;
}

.fab-dot {
    position: absolute;
    left: 27px;
    top: 15px;
    width: 14px;
    height: 14px;
    border-radius: 50%;
    background-color: #eab308;
}

.fab .spark svg {
    width: 10px;
    height: 10px;
    color: #e6e6e6;
}

/* ---- barre des taches windows ---- */
.taskbar {
    height: 48px;
    flex: none;
    display: flex;
    align-items: center;
    border-top: 1px solid #a3a3a3;
    background-color: #d9d9d9;
    font-size: 12px;
    color: #1a1a1a;
    letter-spacing: -0.16px;
}

.weather {
    position: relative;
    width: 631px;
    height: 100%;
    flex: none;
    display: flex;
    align-items: center;
    padding-left: 50px;
}

.sun {
    position: absolute;
    left: 20px;
    top: 13px;
    width: 20px;
    height: 20px;
    border-radius: 50%;
    background: linear-gradient(135deg, #fbb02d, #ea5a1f);
}

.sun-badge {
    position: absolute;
    left: 31px;
    top: 5px;
    width: 15px;
    height: 15px;
    border-radius: 50%;
    background-color: #c42b1c;
    color: #fff;
    font-size: 10px;
    line-height: 15px;
    text-align: center;
}

.weather-txt,
.clock {
    display: flex;
    flex-direction: column;
    line-height: 17px;
}

.weather-txt span {
    color: #454545;
}

.task-mid {
    display: flex;
    align-items: center;
    height: 100%;
}

.task-btn {
    position: relative;
    width: 44px;
    height: 38px;
    display: flex;
    align-items: center;
    justify-content: center;
    border-radius: 4px;
}

.task-btn svg {
    width: 24px;
    height: 24px;
    stroke: none;
}

.task-hi {
    width: 39px;
    margin: 0 3px 0 2px;
    background-color: #efefef;
    box-shadow: 0 1px 1px rgba(0, 0, 0, 0.08);
}

.task-start {
    margin: 0 6px 0 0;
}

.task-claude {
    margin-left: 1px;
}

.task-run::after,
.task-cur::after {
    content: "";
    position: absolute;
    bottom: 1px;
    left: 50%;
    width: 4px;
    height: 4px;
    margin-left: -2px;
    border-radius: 2px;
    background-color: #737373;
}

.task-cur::after {
    width: 15px;
    height: 3px;
    margin-left: -7.5px;
    background-color: #0a78d4;
}

.chrome-badge {
    position: absolute;
    right: 3px;
    top: 3px;
    width: 15px;
    height: 15px;
    border-radius: 50%;
    background-color: #c2185b;
    color: #f5d5e2;
    font-size: 9px;
    line-height: 15px;
    text-align: center;
}

.search {
    width: 218px;
    height: 30px;
    margin-right: 2px;
    display: flex;
    align-items: center;
    padding: 0 10px 0 11px;
    border-radius: 15px;
    background-color: #fff;
    font-size: 14px;
    letter-spacing: -0.35px;
    color: #6b6b6b;
}

.search svg {
    width: 16px;
    height: 16px;
    color: #1a1a1a;
    stroke-width: 1.5;
}

.search span {
    flex: 1;
    margin-left: 9px;
    padding-bottom: 2px;
}

.search svg.search-pic {
    width: 30px;
    height: 24px;
    stroke: none;
}

.tray {
    margin-left: auto;
    display: flex;
    align-items: center;
    padding-right: 19px;
}

.tray-ico {
    width: 14px;
    height: 14px;
    margin-right: 18px;
    stroke-width: 1.2;
}

.tray-wifi {
    margin-right: 9px;
}

.tray-vol {
    margin-right: 8px;
}

.clock {
    margin-left: 10px;
    text-align: right;
}
```
